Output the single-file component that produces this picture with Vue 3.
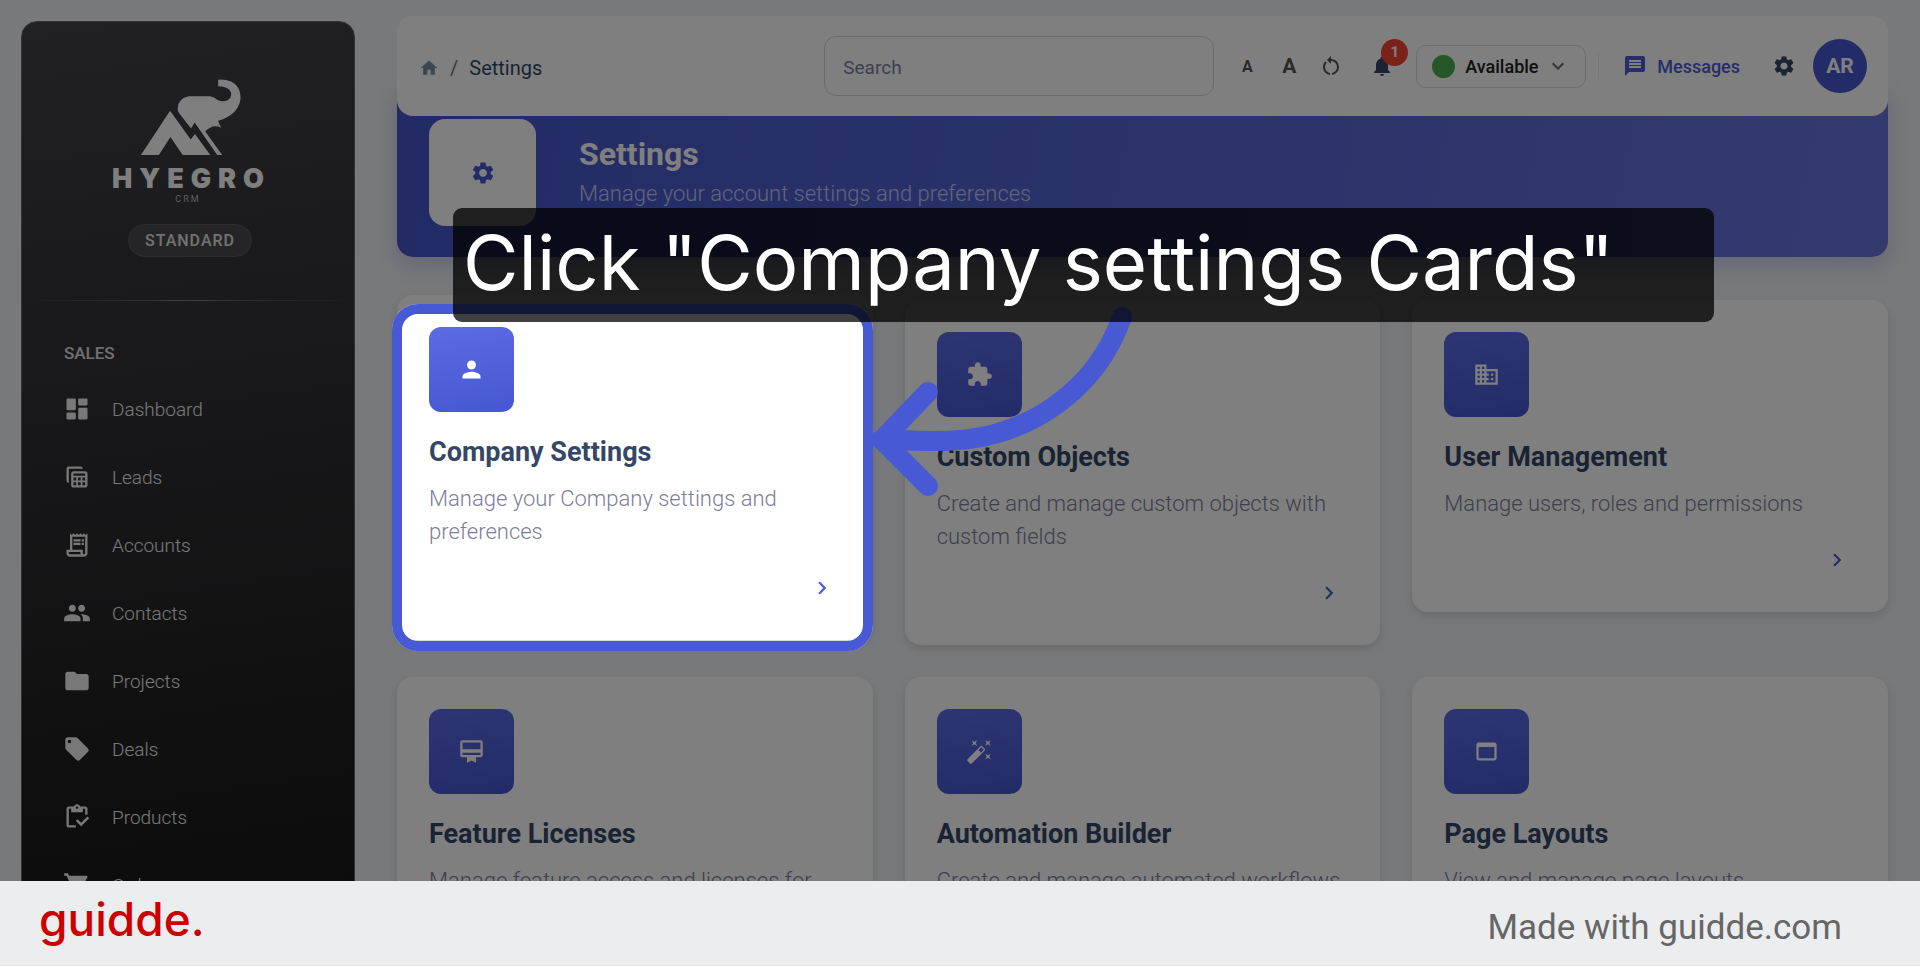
<template>
  <div class="page">
    <div class="stage">
      <aside class="sidebar">
        <div class="brand">
          <svg class="brand-mark" viewBox="422 236 306 232" aria-hidden="true">
            <path d="M424 465 512 332 574 418 587 402 633 465H550L513 411 478 465Z" />
            <path d="M535 325Q536 294 568 288H632Q645 290 655 299 670 306 685 300 698 292 696 278 690 258 657 258V238Q700 236 717 262 726 278 724 298 716 345 657 362 660 376 667 383 645 374 633 383 622 388 618 394L669 465H654L586 367 575 385 540 340Q534 333 535 325Z" />
          </svg>
          <div class="brand-name">HYEGRO</div>
          <div class="brand-sub">CRM</div>
          <span class="plan">STANDARD</span>
        </div>
        <div class="divider"></div>
        <h2 class="group-title">SALES</h2>
        <nav class="nav">
          <a v-for="item in navItems" :key="item.label" class="nav-link" href="#">
            <svg class="nav-icon" viewBox="0 0 24 24" aria-hidden="true">
              <path :d="icons[item.icon]" fill-rule="evenodd" />
            </svg>
            <span>{{ item.label }}</span>
          </a>
        </nav>
      </aside>

      <main class="main">
        <header class="topbar">
          <nav class="breadcrumb">
            <a href="#" aria-label="Home">
              <svg class="home-icon" viewBox="0 0 24 24"><path :d="icons.home" /></svg>
            </a>
            <span class="slash">/</span>
            <span class="crumb">Settings</span>
          </nav>
          <input v-model="search" class="search" type="text" placeholder="Search" aria-label="Search" />
          <div class="text-tools">
            <button type="button" class="tool small-a" aria-label="Decrease text size">A</button>
            <button type="button" class="tool large-a" aria-label="Increase text size">A</button>
            <button type="button" class="tool" aria-label="Reset text size">
              <svg class="tool-icon" viewBox="0 0 24 24"><path :d="icons.restart" /></svg>
            </button>
          </div>
          <button type="button" class="bell" aria-label="Notifications">
            <svg class="tool-icon" viewBox="0 0 24 24"><path :d="icons.bell" /></svg>
            <span class="badge">1</span>
          </button>
          <button type="button" class="status">
            <span class="dot"></span>
            <span>Available</span>
            <svg class="status-arrow" viewBox="0 0 24 24"><path :d="icons.expand" /></svg>
          </button>
          <span class="separator"></span>
          <button type="button" class="messages">
            <svg class="tool-icon" viewBox="0 0 24 24"><path :d="icons.message" /></svg>
            <span>Messages</span>
          </button>
          <button type="button" class="gear" aria-label="Settings">
            <svg class="tool-icon" viewBox="0 0 24 24"><path :d="icons.settings" fill-rule="evenodd" /></svg>
          </button>
          <button type="button" class="avatar">AR</button>
        </header>

        <section class="banner">
          <div class="banner-icon">
            <svg viewBox="0 0 24 24"><path :d="icons.settings" fill-rule="evenodd" /></svg>
          </div>
          <div>
            <h1 class="banner-title">Settings</h1>
            <p class="banner-text">Manage your account settings and preferences</p>
          </div>
        </section>

        <section class="cards">
          <div v-for="card in cards" :key="card.title" class="cell">
            <article class="card" :class="{ lifted: card.active }">
              <div class="card-icon">
                <svg viewBox="0 0 24 24"><path :d="icons[card.icon]" fill-rule="evenodd" /></svg>
              </div>
              <h3 class="card-title">{{ card.title }}</h3>
              <p class="card-text">{{ card.text }}</p>
              <button type="button" class="card-open" :aria-label="`Open ${card.title}`">
                <svg viewBox="0 0 24 24"><path :d="icons.chevron" /></svg>
              </button>
            </article>
            <template v-if="card.active">
              <div class="spotlight"></div>
              <svg class="arrow" viewBox="0 0 260 200" aria-hidden="true">
                <path d="M249 17C225 85 160 141 65 141 46 141 28 140 9 139M55 92 9 140 55 186" />
              </svg>
              <div class="caption">Click "Company settings Cards"</div>
            </template>
          </div>
        </section>
      </main>
    </div>

    <footer class="footer">
      <a class="guidde" href="#">guidde.</a>
      <span class="made">Made with guidde.com</span>
    </footer>
  </div>
</template>

<script setup>
import { ref } from 'vue'

const search = ref('')

const navItems = [
  { label: 'Dashboard', icon: 'dashboard' },
  { label: 'Leads', icon: 'table' },
  { label: 'Accounts', icon: 'receipt' },
  { label: 'Contacts', icon: 'people' },
  { label: 'Projects', icon: 'folder' },
  { label: 'Deals', icon: 'tag' },
  { label: 'Products', icon: 'inventory' },
  { label: 'Orders', icon: 'cart' }
]

const cards = [
  { title: 'Company Settings', text: 'Manage your Company settings and preferences', icon: 'person', active: true },
  { title: 'Custom Objects', text: 'Create and manage custom objects with custom fields', icon: 'extension' },
  { title: 'User Management', text: 'Manage users, roles and permissions', icon: 'business' },
  { title: 'Feature Licenses', text: 'Manage feature access and licenses for your organization', icon: 'membership' },
  { title: 'Automation Builder', text: 'Create and manage automated workflows', icon: 'wand' },
  { title: 'Page Layouts', text: 'View and manage page layouts', icon: 'window' }
]

const icons = {
  dashboard: 'M4 13h6c.55 0 1-.45 1-1V4c0-.55-.45-1-1-1H4c-.55 0-1 .45-1 1v8c0 .55.45 1 1 1zm0 8h6c.55 0 1-.45 1-1v-4c0-.55-.45-1-1-1H4c-.55 0-1 .45-1 1v4c0 .55.45 1 1 1zm10 0h6c.55 0 1-.45 1-1v-8c0-.55-.45-1-1-1h-6c-.55 0-1 .45-1 1v8c0 .55.45 1 1 1zM13 4v4c0 .55.45 1 1 1h6c.55 0 1-.45 1-1V4c0-.55-.45-1-1-1h-6c-.55 0-1 .45-1 1z',
  table: 'M5 3h10c1.1 0 2 .9 2 2h-2H5v10v2c-1.1 0-2-.9-2-2V5c0-1.1.9-2 2-2zM9 7h10c1.1 0 2 .9 2 2v10c0 1.1-.9 2-2 2H9c-1.1 0-2-.9-2-2V9c0-1.1.9-2 2-2zM9 9v2h10V9zM9 12.500v2.500h2.300v-2.500zM12.800 12.500v2.500h2.400v-2.500zM16.700 12.500v2.500H19v-2.500zM9 16.500V19h2.300v-2.500zM12.800 16.500V19h2.400v-2.500zM16.700 16.500V19H19v-2.500z',
  receipt: 'M19.5 3.500 18 2l-1.500 1.500L15 2l-1.500 1.500L12 2l-1.500 1.500L9 2 7.500 3.500 6 2v14H3v3c0 1.660 1.340 3 3 3h12c1.660 0 3-1.340 3-3V2l-1.500 1.500zM15 20H6c-.55 0-1-.45-1-1v-1h10v2zm4-1c0 .55-.45 1-1 1s-1-.45-1-1v-3H8V5h11v14zM9 7h6v2H9zM16 7h2v2h-2zM9 10h6v2H9zM16 10h2v2h-2z',
  people: 'M16 11c1.660 0 2.990-1.340 2.990-3S17.660 5 16 5s-3 1.340-3 3 1.340 3 3 3zm-8 0c1.660 0 2.990-1.340 2.990-3S9.660 5 8 5 5 6.340 5 8s1.340 3 3 3zm0 2c-2.330 0-7 1.170-7 3.500V19h14v-2.500c0-2.330-4.670-3.500-7-3.500zm8 0c-.29 0-.62.02-.97.05 1.160.84 1.970 1.970 1.970 3.450V19h6v-2.500c0-2.330-4.670-3.500-7-3.500z',
  folder: 'M10 4H4c-1.100 0-1.990.9-1.990 2L2 18c0 1.100.9 2 2 2h16c1.100 0 2-.9 2-2V8c0-1.100-.9-2-2-2h-8l-2-2z',
  tag: 'M21.410 11.580l-9-9C12.050 2.220 11.550 2 11 2H4c-1.100 0-2 .9-2 2v7c0 .55.22 1.050.59 1.420l9 9c.36.36.86.58 1.410.58s1.050-.22 1.410-.59l7-7c.37-.36.59-.86.59-1.410s-.23-1.060-.59-1.420zM5.500 7C4.670 7 4 6.330 4 5.500S4.670 4 5.500 4 7 4.670 7 5.500 6.330 7 5.500 7z',
  inventory: 'M5 5h2v3h10V5h2v5h2V5c0-1.100-.9-2-2-2h-4.180C14.400 1.840 13.300 1 12 1s-2.400.84-2.820 2H5c-1.100 0-2 .9-2 2v14c0 1.100.9 2 2 2h6v-2H5V5zm7-2c.55 0 1 .45 1 1s-.45 1-1 1-1-.45-1-1 .45-1 1-1zM21 11.500 15.510 17l-3.010-3-1.500 1.500 4.510 4.500 6.990-7z',
  cart: 'M7 18c-1.100 0-1.990.9-1.990 2S5.900 22 7 22s2-.9 2-2-.9-2-2-2zM1 2v2h2l3.600 7.590-1.350 2.450C4.520 15.370 5.480 17 7 17h12v-2H7l1.100-2h7.450c.75 0 1.410-.41 1.750-1.030l3.580-6.490C21.250 4.820 20.770 4 20 4H5.210l-.94-2H1zm16 16c-1.100 0-1.990.9-1.990 2s.89 2 1.990 2 2-.9 2-2-.9-2-2-2z',
  home: 'M10 20v-6h4v6h5v-8h3L12 3 2 12h3v8z',
  restart: 'M12 5V2L8 6l4 4V7c3.310 0 6 2.690 6 6 0 2.970-2.170 5.430-5 5.910v2.020c3.950-.49 7-3.850 7-7.930 0-4.420-3.580-8-8-8zm-6 8c0-1.650.67-3.150 1.760-4.240L6.340 7.340C4.900 8.790 4 10.790 4 13c0 4.080 3.050 7.440 7 7.930v-2.020c-2.830-.48-5-2.940-5-5.910z',
  bell: 'M12 22c1.100 0 2-.9 2-2h-4c0 1.100.89 2 2 2zm6-6v-5c0-3.070-1.640-5.640-4.500-6.320V4c0-.83-.67-1.500-1.500-1.500s-1.500.67-1.500 1.500v.68C7.630 5.360 6 7.920 6 11v5l-2 2v1h16v-1l-2-2z',
  expand: 'M16.590 8.590 12 13.170 7.410 8.590 6 10l6 6 6-6z',
  message: 'M20 2H4c-1.100 0-1.990.9-1.990 2L2 22l4-4h14c1.100 0 2-.9 2-2V4c0-1.100-.9-2-2-2zm-2 12H6v-2h12v2zm0-3H6V9h12v2zm0-3H6V6h12v2z',
  settings: 'M19.140 12.940c.04-.3.06-.61.06-.94 0-.32-.02-.64-.07-.94l2.030-1.580c.18-.14.23-.41.12-.61l-1.920-3.320c-.12-.22-.37-.29-.59-.22l-2.390.96c-.5-.38-1.030-.7-1.620-.94l-.36-2.540c-.04-.24-.24-.41-.48-.41h-3.840c-.24 0-.43.17-.47.41l-.36 2.540c-.59.24-1.130.57-1.620.94l-2.390-.96c-.22-.08-.47 0-.59.22L2.740 8.870c-.12.21-.08.47.12.61l2.030 1.580c-.05.3-.09.63-.09.94s.02.64.07.94l-2.030 1.580c-.18.14-.23.41-.12.61l1.920 3.320c.12.22.37.29.59.22l2.390-.96c.5.38 1.030.7 1.620.94l.36 2.540c.05.24.24.41.48.41h3.840c.24 0 .44-.17.47-.41l.36-2.540c.59-.24 1.130-.56 1.620-.94l2.390.96c.22.08.47 0 .59-.22l1.920-3.320c.12-.22.07-.47-.12-.61l-2.010-1.580zM12 15.600c-1.980 0-3.600-1.620-3.600-3.600s1.620-3.600 3.600-3.600 3.600 1.620 3.600 3.600-1.620 3.600-3.600 3.600z',
  person: 'M12 12c2.210 0 4-1.790 4-4s-1.790-4-4-4-4 1.790-4 4 1.790 4 4 4zm0 2c-2.670 0-8 1.340-8 4v2h16v-2c0-2.660-5.330-4-8-4z',
  extension: 'M20.500 11H19V7c0-1.100-.9-2-2-2h-4V3.500C13 2.120 11.880 1 10.500 1S8 2.120 8 3.500V5H4c-1.100 0-1.990.9-1.990 2v3.800H3.500c1.490 0 2.700 1.210 2.700 2.700s-1.210 2.700-2.700 2.700H2V20c0 1.100.9 2 2 2h3.800v-1.500c0-1.490 1.210-2.700 2.700-2.700s2.700 1.210 2.700 2.700V22H17c1.100 0 2-.9 2-2v-4h1.500c1.380 0 2.500-1.120 2.500-2.500S21.880 11 20.500 11z',
  business: 'M12 7V3H2v18h20V7H12zM6 19H4v-2h2v2zm0-4H4v-2h2v2zm0-4H4V9h2v2zm0-4H4V5h2v2zm4 12H8v-2h2v2zm0-4H8v-2h2v2zm0-4H8V9h2v2zm0-4H8V5h2v2zm10 12h-8v-2h2v-2h-2v-2h2v-2h-2V9h8v10zm-2-8h-2v2h2v-2zm0 4h-2v2h2v-2z',
  membership: 'M20 2H4c-1.110 0-2 .89-2 2v11c0 1.110.89 2 2 2h4v5l4-2 4 2v-5h4c1.110 0 2-.89 2-2V4c0-1.110-.89-2-2-2zm0 13H4v-2h16v2zm0-5H4V4h16v6z',
  wand: 'M7.500 5.600 10 7 8.600 4.500 10 2 7.500 3.400 5 2l1.400 2.500L5 7zm12 9.800L17 14l1.400 2.500L17 19l2.500-1.400L22 19l-1.400-2.500L22 14zM22 2l-2.500 1.400L17 2l1.400 2.500L17 7l2.500-1.400L22 7l-1.400-2.500zm-7.630 5.290c-.39-.39-1.020-.39-1.410 0L1.290 18.960c-.39.39-.39 1.020 0 1.410l2.340 2.340c.39.39 1.020.39 1.410 0L16.700 11.050c.39-.39.39-1.020 0-1.410l-2.330-2.350zm-1.030 5.490-2.120-2.120 2.440-2.440 2.120 2.120-2.440 2.440z',
  window: 'M19 4H5c-1.110 0-2 .9-2 2v12c0 1.100.89 2 2 2h14c1.100 0 2-.9 2-2V6c0-1.100-.89-2-2-2zm0 14H5V8h14v10z',
  chevron: 'M10 6 8.590 7.410 13.170 12l-4.580 4.590L10 18l6-6z'
}
</script>

<style>
body {
  margin: 0;
}
</style>

<style scoped>
.page {
  display: flex;
  flex-direction: column;
  height: 100vh;
  font-family: Roboto, "Liberation Sans", sans-serif;
}

.page *,
.page {
  box-sizing: border-box;
}

h1,
h2,
h3,
p {
  margin: 0;
}

a {
  color: inherit;
  text-decoration: none;
}

button {
  padding: 0;
  border: 0;
  background: none;
  font-family: inherit;
  cursor: pointer;
}

svg {
  display: block;
  fill: currentColor;
}

.stage {
  position: relative;
  display: flex;
  flex: 1;
  gap: 42px;
  min-height: 0;
  padding: 0 32px 0 21px;
  overflow: hidden;
  background: #f0f2f5;
}

.sidebar {
  flex: none;
  width: 334px;
  height: 1000px;
  margin-top: 21px;
  border: 1px solid #68686c;
  border-radius: 16px;
  background: linear-gradient(172deg, #42424a, #191919 86%);
  color: #fff;
}

.brand {
  display: flex;
  flex-direction: column;
  align-items: center;
  height: 278px;
  padding-top: 57px;
}

.brand-mark {
  width: 102px;
  height: 77px;
  margin-left: 6px;
}

.brand-name {
  margin-top: 7px;
  padding-left: 7px;
  font-family: Inter, sans-serif;
  font-size: 27px;
  font-weight: 900;
  line-height: 32px;
  letter-spacing: 7px;
}

.brand-sub {
  font-size: 9px;
  line-height: 9px;
  letter-spacing: 2px;
  color: #bbb;
}

.plan {
  margin-top: 20px;
  margin-left: 4px;
  padding: 0 16px;
  border: 1px solid #5c5c60;
  border-radius: 17px;
  background: #4a4a4e;
  color: #e4e4e4;
  font-size: 16px;
  font-weight: 500;
  line-height: 31px;
  letter-spacing: 1px;
}

.divider {
  height: 1px;
  background: linear-gradient(90deg, transparent, #77777a, transparent);
}

.group-title {
  margin: 40px 0 10px 42px;
  color: #e0e0e0;
  font-size: 17px;
  font-weight: 500;
  line-height: 24px;
}

.nav-link {
  display: flex;
  align-items: center;
  gap: 21px;
  height: 68px;
  padding-left: 41px;
  color: #f0f0f0;
  font-size: 19px;
  font-weight: 300;
}

.nav-icon {
  width: 28px;
  height: 28px;
}

.main {
  flex: 1;
  min-width: 0;
}

.topbar {
  position: relative;
  z-index: 2;
  display: flex;
  align-items: center;
  gap: 12px;
  height: 100px;
  margin-top: 16px;
  padding: 0 21px;
  border-radius: 16px;
  background: #fff;
}

.breadcrumb {
  display: flex;
  align-items: center;
  margin-right: auto;
  padding: 3px 0 0 1px;
  color: #344767;
  font-size: 20px;
}

.home-icon {
  width: 20px;
  height: 20px;
  color: #7b8a9e;
}

.slash {
  margin: 0 11px;
  color: #6c757d;
}

.search {
  width: 390px;
  height: 60px;
  padding: 3px 18px 0;
  border: 1px solid #d2d6da;
  border-radius: 12px;
  background: transparent;
  color: #495057;
  font-family: inherit;
  font-size: 19px;
}

.search::placeholder {
  color: #7b809a;
  opacity: 1;
}

.text-tools {
  display: flex;
}

.tool {
  display: flex;
  align-items: center;
  justify-content: center;
  width: 42px;
  height: 40px;
  color: #555;
  font-weight: 700;
}

.small-a {
  font-size: 16px;
}

.large-a {
  font-size: 21px;
}

.tool-icon {
  width: 24px;
  height: 24px;
}

.bell {
  position: relative;
  display: flex;
  align-items: center;
  justify-content: center;
  width: 44px;
  height: 40px;
  margin-left: -4px;
  color: #344767;
}

.badge {
  position: absolute;
  top: -7px;
  right: -4px;
  width: 27px;
  height: 27px;
  border-radius: 50%;
  background: #f44335;
  color: #fff;
  font-size: 15px;
  font-weight: 700;
  line-height: 27px;
}

.status {
  display: flex;
  align-items: center;
  width: 170px;
  height: 43px;
  padding: 0 15px;
  border: 1px solid #d9d9d9;
  border-radius: 10px;
  color: #212121;
  font-size: 18px;
  font-weight: 500;
}

.dot {
  width: 23px;
  height: 23px;
  margin-right: 10px;
  border-radius: 50%;
  background: #4caf50;
}

.status-arrow {
  width: 24px;
  height: 24px;
  margin-left: auto;
  color: #666;
}

.separator {
  width: 1px;
  height: 26px;
  background: #ececec;
}

.messages {
  display: flex;
  align-items: center;
  gap: 10px;
  padding: 0 15px 0 12px;
  color: #4a5bd4;
  font-size: 18px;
  font-weight: 500;
}

.gear {
  display: flex;
  justify-content: center;
  width: 34px;
  color: #344767;
}

.avatar {
  width: 54px;
  height: 54px;
  border-radius: 50%;
  background: #4759d1;
  color: #fff;
  font-size: 21px;
  font-weight: 700;
}

/* starts underneath the top bar, so only its lower corners show */
.banner {
  display: flex;
  gap: 43px;
  height: 173px;
  margin-top: -32px;
  padding: 35px 32px 0;
  border-radius: 16px;
  background: linear-gradient(100deg, #4656cc, #6875dd);
  box-shadow: 0 8px 20px rgba(72, 89, 209, 0.25);
  color: #fff;
}

.banner-icon {
  display: flex;
  align-items: center;
  justify-content: center;
  width: 107px;
  height: 107px;
  border-radius: 16px;
  background: #fff;
  color: #4759d1;
}

.banner-icon svg {
  width: 26px;
  height: 26px;
}

.banner-title {
  margin-top: 15px;
  font-size: 32px;
  font-weight: 700;
  line-height: 40px;
}

.banner-text {
  margin-top: 4px;
  color: #c4caf5;
  font-size: 22px;
  font-weight: 300;
  line-height: 32px;
}

.cards {
  display: grid;
  grid-template-columns: repeat(3, minmax(0, 1fr));
  gap: 32px;
  align-items: start;
  margin-top: 43px;
}

.cell {
  position: relative;
}

.card {
  padding: 32px;
  border-radius: 16px;
  background: #fff;
  box-shadow: 0 4px 8px rgba(0, 0, 0, 0.12);
}

.card.lifted {
  margin: -5px 0 5px;
}

.card-icon {
  display: flex;
  align-items: center;
  justify-content: center;
  width: 85px;
  height: 85px;
  border-radius: 12px;
  background: linear-gradient(170deg, #5a6be4, #4658d0);
  color: #fff;
}

.card-icon svg {
  width: 27px;
  height: 27px;
}

.card-title {
  margin-top: 22px;
  color: #344767;
  font-size: 27px;
  font-weight: 700;
  line-height: 36px;
}

.card-text {
  margin-top: 12px;
  color: #7b809a;
  font-size: 22px;
  font-weight: 300;
  line-height: 33px;
}

.card-open {
  display: flex;
  align-items: center;
  justify-content: center;
  width: 38px;
  height: 40px;
  margin: 20px 0 0 auto;
  color: #4a5bd4;
}

.card-open svg {
  width: 26px;
  height: 26px;
}

/* dims everything around the highlighted card */
.spotlight {
  position: absolute;
  z-index: 5;
  top: 4px;
  right: 0;
  bottom: -6px;
  left: -5px;
  border: 10px solid #475ad3;
  border-radius: 26px;
  box-shadow: 0 0 0 3000px rgba(0, 0, 0, 0.5);
}

.arrow {
  position: absolute;
  z-index: 6;
  top: 0;
  left: 100%;
  width: 260px;
  height: 200px;
  fill: none;
  stroke: #475ad3;
  stroke-width: 20;
  stroke-linecap: round;
  stroke-linejoin: round;
}

.caption {
  position: absolute;
  z-index: 7;
  top: -92px;
  left: 56px;
  width: 1261px;
  height: 114px;
  padding: 0 10px;
  border-radius: 9px;
  background: rgba(0, 0, 0, 0.75);
  color: #fff;
  font-family: Inter, "Liberation Sans", sans-serif;
  font-size: 76px;
  line-height: 108px;
  white-space: nowrap;
}

.footer {
  z-index: 10;
  display: flex;
  flex: none;
  align-items: center;
  justify-content: space-between;
  height: 85px;
  padding: 0 78px 0 39px;
  border-bottom: 1px solid #e0e1e3;
  background: #ecedef;
}

.guidde {
  padding-bottom: 8px;
  color: #c00;
  font-family: Inter, sans-serif;
  font-size: 46px;
  font-weight: 500;
  line-height: 56px;
}

.made {
  padding-top: 9px;
  color: #666;
  font-size: 35px;
  line-height: 42px;
}
</style>
